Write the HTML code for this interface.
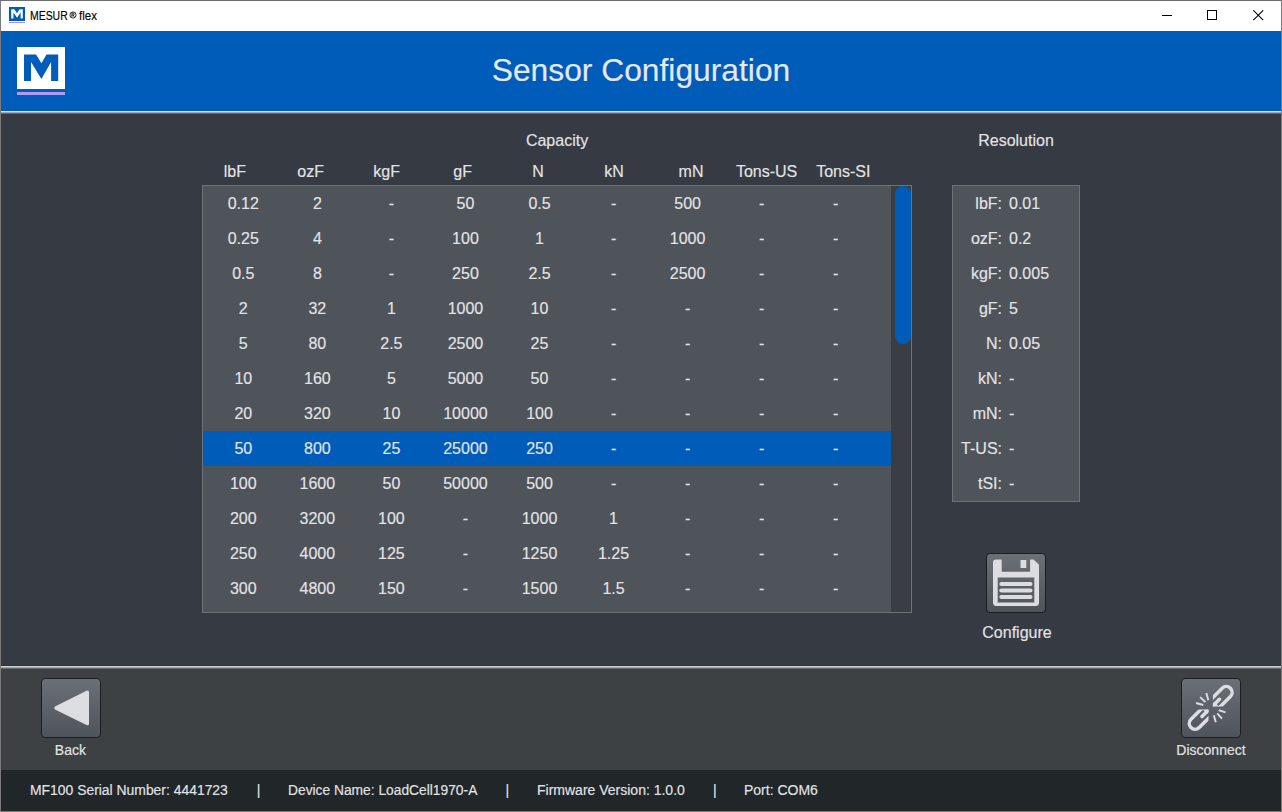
<!DOCTYPE html>
<html><head><meta charset="utf-8">
<style>
*{margin:0;padding:0;box-sizing:border-box}
html,body{width:1282px;height:812px;overflow:hidden;background:#363a42;font-family:"Liberation Sans", sans-serif}
.abs{position:absolute}
.t{position:absolute;white-space:nowrap;line-height:1;-webkit-text-stroke:0.15px currentColor}
</style></head><body>
<div class="abs" style="left:0;top:0;width:1282px;height:31px;background:#fff"></div>
<svg class="abs" style="left:9px;top:7px" width="16" height="17" viewBox="0 0 16 17">
<rect x="0" y="0" width="16" height="14" fill="#005cb9"/>
<path d="M2.2 11.5V2.3H5.4L8 6.2L10.6 2.3H13.8V11.5H11.6V5.6L8 10.8L4.4 5.6V11.5Z" fill="#fff"/>
<rect x="0" y="15" width="16" height="1" fill="#a98ff5"/>
</svg>
<div class="t" style="left:30px;top:9.84px;font-size:12px;color:#000;transform:scaleX(0.87);transform-origin:0 0">MESUR</div>
<svg class="abs" style="left:69.3px;top:10.8px" width="8" height="8" viewBox="0 0 8 8"><circle cx="4" cy="4" r="3.1" fill="none" stroke="#000" stroke-width="0.8"/><path d="M2.9 6V2.1H4.2Q5.3 2.1 5.3 3.05Q5.3 4 4.2 4H2.9M4.2 4L5.4 6" fill="none" stroke="#000" stroke-width="0.8"/></svg>
<div class="t" style="left:78.8px;top:9.84px;font-size:12px;color:#000;transform:scaleX(0.96);transform-origin:0 0">flex</div>
<div class="abs" style="left:1162px;top:15px;width:10px;height:1px;background:#000"></div>
<div class="abs" style="left:1207px;top:10px;width:10px;height:10px;border:1px solid #000"></div>
<svg class="abs" style="left:1253px;top:10px" width="11" height="11" viewBox="0 0 11 11"><path d="M0.3 0.3L10.2 10.2M10.2 0.3L0.3 10.2" stroke="#000" stroke-width="1.05"/></svg>
<div class="abs" style="left:0;top:31px;width:1282px;height:80px;background:#005cb9"></div>
<div class="abs" style="left:0;top:111px;width:1282px;height:1px;background:#dcdee0"></div>
<div class="abs" style="left:0;top:112px;width:1282px;height:1px;background:#a3a6aa"></div>
<div class="abs" style="left:0;top:113px;width:1282px;height:1px;background:#64676d"></div>
<svg class="abs" style="left:17px;top:47px" width="48" height="48" viewBox="0 0 48 48">
<rect x="0" y="0" width="48" height="42" fill="#fff"/>
<path d="M7 34V7.4H19L24.4 16.3L29.5 7.4H41.2V34H34.1V15L24.4 32.1L14 15V34Z" fill="#005cb9"/>
<rect x="0" y="45" width="48" height="3" fill="#b19af0"/>
</svg>
<div class="t" style="left:441.2px;width:400px;text-align:center;top:54.21px;font-size:32px;color:#e6e8ea;transform:scaleX(0.993)">Sensor Configuration</div>
<div class="abs" style="left:0;top:114px;width:1282px;height:551px;background:#363a42"></div>
<div class="t" style="left:357px;width:400px;text-align:center;top:133.46px;font-size:16px;color:#e3e4e6;">Capacity</div>
<div class="t" style="left:34.8px;width:400px;text-align:center;top:164.46px;font-size:16px;color:#e3e4e6;">lbF</div>
<div class="t" style="left:110.6px;width:400px;text-align:center;top:164.46px;font-size:16px;color:#e3e4e6;">ozF</div>
<div class="t" style="left:186.7px;width:400px;text-align:center;top:164.46px;font-size:16px;color:#e3e4e6;">kgF</div>
<div class="t" style="left:262.6px;width:400px;text-align:center;top:164.46px;font-size:16px;color:#e3e4e6;">gF</div>
<div class="t" style="left:338px;width:400px;text-align:center;top:164.46px;font-size:16px;color:#e3e4e6;">N</div>
<div class="t" style="left:414px;width:400px;text-align:center;top:164.46px;font-size:16px;color:#e3e4e6;">kN</div>
<div class="t" style="left:491px;width:400px;text-align:center;top:164.46px;font-size:16px;color:#e3e4e6;">mN</div>
<div class="t" style="left:566.6px;width:400px;text-align:center;top:164.46px;font-size:16px;color:#e3e4e6;">Tons-US</div>
<div class="t" style="left:643.3px;width:400px;text-align:center;top:164.46px;font-size:16px;color:#e3e4e6;">Tons-SI</div>
<div class="abs" style="left:202px;top:185px;width:710px;height:428px;border:1px solid #6d7178;background:#4f535a"></div>
<div class="abs" style="left:891px;top:186px;width:20px;height:426px;background:#3a3d44"></div>
<div class="abs" style="left:895px;top:186px;width:16px;height:158px;border-radius:8px;background:#005cb9"></div>
<div class="abs" style="left:203px;top:431px;width:688px;height:35px;background:#005cb9"></div>
<div class="t" style="left:43.3px;width:400px;text-align:center;top:196.46px;font-size:16px;color:#e3e4e6;">0.12</div>
<div class="t" style="left:117.35px;width:400px;text-align:center;top:196.46px;font-size:16px;color:#e3e4e6;">2</div>
<div class="t" style="left:191.4px;width:400px;text-align:center;top:196.46px;font-size:16px;color:#e3e4e6;">-</div>
<div class="t" style="left:265.45px;width:400px;text-align:center;top:196.46px;font-size:16px;color:#e3e4e6;">50</div>
<div class="t" style="left:339.5px;width:400px;text-align:center;top:196.46px;font-size:16px;color:#e3e4e6;">0.5</div>
<div class="t" style="left:413.55px;width:400px;text-align:center;top:196.46px;font-size:16px;color:#e3e4e6;">-</div>
<div class="t" style="left:487.6px;width:400px;text-align:center;top:196.46px;font-size:16px;color:#e3e4e6;">500</div>
<div class="t" style="left:561.65px;width:400px;text-align:center;top:196.46px;font-size:16px;color:#e3e4e6;">-</div>
<div class="t" style="left:635.7px;width:400px;text-align:center;top:196.46px;font-size:16px;color:#e3e4e6;">-</div>
<div class="t" style="left:43.3px;width:400px;text-align:center;top:231.46px;font-size:16px;color:#e3e4e6;">0.25</div>
<div class="t" style="left:117.35px;width:400px;text-align:center;top:231.46px;font-size:16px;color:#e3e4e6;">4</div>
<div class="t" style="left:191.4px;width:400px;text-align:center;top:231.46px;font-size:16px;color:#e3e4e6;">-</div>
<div class="t" style="left:265.45px;width:400px;text-align:center;top:231.46px;font-size:16px;color:#e3e4e6;">100</div>
<div class="t" style="left:339.5px;width:400px;text-align:center;top:231.46px;font-size:16px;color:#e3e4e6;">1</div>
<div class="t" style="left:413.55px;width:400px;text-align:center;top:231.46px;font-size:16px;color:#e3e4e6;">-</div>
<div class="t" style="left:487.6px;width:400px;text-align:center;top:231.46px;font-size:16px;color:#e3e4e6;">1000</div>
<div class="t" style="left:561.65px;width:400px;text-align:center;top:231.46px;font-size:16px;color:#e3e4e6;">-</div>
<div class="t" style="left:635.7px;width:400px;text-align:center;top:231.46px;font-size:16px;color:#e3e4e6;">-</div>
<div class="t" style="left:43.3px;width:400px;text-align:center;top:266.46px;font-size:16px;color:#e3e4e6;">0.5</div>
<div class="t" style="left:117.35px;width:400px;text-align:center;top:266.46px;font-size:16px;color:#e3e4e6;">8</div>
<div class="t" style="left:191.4px;width:400px;text-align:center;top:266.46px;font-size:16px;color:#e3e4e6;">-</div>
<div class="t" style="left:265.45px;width:400px;text-align:center;top:266.46px;font-size:16px;color:#e3e4e6;">250</div>
<div class="t" style="left:339.5px;width:400px;text-align:center;top:266.46px;font-size:16px;color:#e3e4e6;">2.5</div>
<div class="t" style="left:413.55px;width:400px;text-align:center;top:266.46px;font-size:16px;color:#e3e4e6;">-</div>
<div class="t" style="left:487.6px;width:400px;text-align:center;top:266.46px;font-size:16px;color:#e3e4e6;">2500</div>
<div class="t" style="left:561.65px;width:400px;text-align:center;top:266.46px;font-size:16px;color:#e3e4e6;">-</div>
<div class="t" style="left:635.7px;width:400px;text-align:center;top:266.46px;font-size:16px;color:#e3e4e6;">-</div>
<div class="t" style="left:43.3px;width:400px;text-align:center;top:301.46px;font-size:16px;color:#e3e4e6;">2</div>
<div class="t" style="left:117.35px;width:400px;text-align:center;top:301.46px;font-size:16px;color:#e3e4e6;">32</div>
<div class="t" style="left:191.4px;width:400px;text-align:center;top:301.46px;font-size:16px;color:#e3e4e6;">1</div>
<div class="t" style="left:265.45px;width:400px;text-align:center;top:301.46px;font-size:16px;color:#e3e4e6;">1000</div>
<div class="t" style="left:339.5px;width:400px;text-align:center;top:301.46px;font-size:16px;color:#e3e4e6;">10</div>
<div class="t" style="left:413.55px;width:400px;text-align:center;top:301.46px;font-size:16px;color:#e3e4e6;">-</div>
<div class="t" style="left:487.6px;width:400px;text-align:center;top:301.46px;font-size:16px;color:#e3e4e6;">-</div>
<div class="t" style="left:561.65px;width:400px;text-align:center;top:301.46px;font-size:16px;color:#e3e4e6;">-</div>
<div class="t" style="left:635.7px;width:400px;text-align:center;top:301.46px;font-size:16px;color:#e3e4e6;">-</div>
<div class="t" style="left:43.3px;width:400px;text-align:center;top:336.46px;font-size:16px;color:#e3e4e6;">5</div>
<div class="t" style="left:117.35px;width:400px;text-align:center;top:336.46px;font-size:16px;color:#e3e4e6;">80</div>
<div class="t" style="left:191.4px;width:400px;text-align:center;top:336.46px;font-size:16px;color:#e3e4e6;">2.5</div>
<div class="t" style="left:265.45px;width:400px;text-align:center;top:336.46px;font-size:16px;color:#e3e4e6;">2500</div>
<div class="t" style="left:339.5px;width:400px;text-align:center;top:336.46px;font-size:16px;color:#e3e4e6;">25</div>
<div class="t" style="left:413.55px;width:400px;text-align:center;top:336.46px;font-size:16px;color:#e3e4e6;">-</div>
<div class="t" style="left:487.6px;width:400px;text-align:center;top:336.46px;font-size:16px;color:#e3e4e6;">-</div>
<div class="t" style="left:561.65px;width:400px;text-align:center;top:336.46px;font-size:16px;color:#e3e4e6;">-</div>
<div class="t" style="left:635.7px;width:400px;text-align:center;top:336.46px;font-size:16px;color:#e3e4e6;">-</div>
<div class="t" style="left:43.3px;width:400px;text-align:center;top:371.46px;font-size:16px;color:#e3e4e6;">10</div>
<div class="t" style="left:117.35px;width:400px;text-align:center;top:371.46px;font-size:16px;color:#e3e4e6;">160</div>
<div class="t" style="left:191.4px;width:400px;text-align:center;top:371.46px;font-size:16px;color:#e3e4e6;">5</div>
<div class="t" style="left:265.45px;width:400px;text-align:center;top:371.46px;font-size:16px;color:#e3e4e6;">5000</div>
<div class="t" style="left:339.5px;width:400px;text-align:center;top:371.46px;font-size:16px;color:#e3e4e6;">50</div>
<div class="t" style="left:413.55px;width:400px;text-align:center;top:371.46px;font-size:16px;color:#e3e4e6;">-</div>
<div class="t" style="left:487.6px;width:400px;text-align:center;top:371.46px;font-size:16px;color:#e3e4e6;">-</div>
<div class="t" style="left:561.65px;width:400px;text-align:center;top:371.46px;font-size:16px;color:#e3e4e6;">-</div>
<div class="t" style="left:635.7px;width:400px;text-align:center;top:371.46px;font-size:16px;color:#e3e4e6;">-</div>
<div class="t" style="left:43.3px;width:400px;text-align:center;top:406.46px;font-size:16px;color:#e3e4e6;">20</div>
<div class="t" style="left:117.35px;width:400px;text-align:center;top:406.46px;font-size:16px;color:#e3e4e6;">320</div>
<div class="t" style="left:191.4px;width:400px;text-align:center;top:406.46px;font-size:16px;color:#e3e4e6;">10</div>
<div class="t" style="left:265.45px;width:400px;text-align:center;top:406.46px;font-size:16px;color:#e3e4e6;">10000</div>
<div class="t" style="left:339.5px;width:400px;text-align:center;top:406.46px;font-size:16px;color:#e3e4e6;">100</div>
<div class="t" style="left:413.55px;width:400px;text-align:center;top:406.46px;font-size:16px;color:#e3e4e6;">-</div>
<div class="t" style="left:487.6px;width:400px;text-align:center;top:406.46px;font-size:16px;color:#e3e4e6;">-</div>
<div class="t" style="left:561.65px;width:400px;text-align:center;top:406.46px;font-size:16px;color:#e3e4e6;">-</div>
<div class="t" style="left:635.7px;width:400px;text-align:center;top:406.46px;font-size:16px;color:#e3e4e6;">-</div>
<div class="t" style="left:43.3px;width:400px;text-align:center;top:441.46px;font-size:16px;color:#e3e4e6;">50</div>
<div class="t" style="left:117.35px;width:400px;text-align:center;top:441.46px;font-size:16px;color:#e3e4e6;">800</div>
<div class="t" style="left:191.4px;width:400px;text-align:center;top:441.46px;font-size:16px;color:#e3e4e6;">25</div>
<div class="t" style="left:265.45px;width:400px;text-align:center;top:441.46px;font-size:16px;color:#e3e4e6;">25000</div>
<div class="t" style="left:339.5px;width:400px;text-align:center;top:441.46px;font-size:16px;color:#e3e4e6;">250</div>
<div class="t" style="left:413.55px;width:400px;text-align:center;top:441.46px;font-size:16px;color:#e3e4e6;">-</div>
<div class="t" style="left:487.6px;width:400px;text-align:center;top:441.46px;font-size:16px;color:#e3e4e6;">-</div>
<div class="t" style="left:561.65px;width:400px;text-align:center;top:441.46px;font-size:16px;color:#e3e4e6;">-</div>
<div class="t" style="left:635.7px;width:400px;text-align:center;top:441.46px;font-size:16px;color:#e3e4e6;">-</div>
<div class="t" style="left:43.3px;width:400px;text-align:center;top:476.46px;font-size:16px;color:#e3e4e6;">100</div>
<div class="t" style="left:117.35px;width:400px;text-align:center;top:476.46px;font-size:16px;color:#e3e4e6;">1600</div>
<div class="t" style="left:191.4px;width:400px;text-align:center;top:476.46px;font-size:16px;color:#e3e4e6;">50</div>
<div class="t" style="left:265.45px;width:400px;text-align:center;top:476.46px;font-size:16px;color:#e3e4e6;">50000</div>
<div class="t" style="left:339.5px;width:400px;text-align:center;top:476.46px;font-size:16px;color:#e3e4e6;">500</div>
<div class="t" style="left:413.55px;width:400px;text-align:center;top:476.46px;font-size:16px;color:#e3e4e6;">-</div>
<div class="t" style="left:487.6px;width:400px;text-align:center;top:476.46px;font-size:16px;color:#e3e4e6;">-</div>
<div class="t" style="left:561.65px;width:400px;text-align:center;top:476.46px;font-size:16px;color:#e3e4e6;">-</div>
<div class="t" style="left:635.7px;width:400px;text-align:center;top:476.46px;font-size:16px;color:#e3e4e6;">-</div>
<div class="t" style="left:43.3px;width:400px;text-align:center;top:511.46px;font-size:16px;color:#e3e4e6;">200</div>
<div class="t" style="left:117.35px;width:400px;text-align:center;top:511.46px;font-size:16px;color:#e3e4e6;">3200</div>
<div class="t" style="left:191.4px;width:400px;text-align:center;top:511.46px;font-size:16px;color:#e3e4e6;">100</div>
<div class="t" style="left:265.45px;width:400px;text-align:center;top:511.46px;font-size:16px;color:#e3e4e6;">-</div>
<div class="t" style="left:339.5px;width:400px;text-align:center;top:511.46px;font-size:16px;color:#e3e4e6;">1000</div>
<div class="t" style="left:413.55px;width:400px;text-align:center;top:511.46px;font-size:16px;color:#e3e4e6;">1</div>
<div class="t" style="left:487.6px;width:400px;text-align:center;top:511.46px;font-size:16px;color:#e3e4e6;">-</div>
<div class="t" style="left:561.65px;width:400px;text-align:center;top:511.46px;font-size:16px;color:#e3e4e6;">-</div>
<div class="t" style="left:635.7px;width:400px;text-align:center;top:511.46px;font-size:16px;color:#e3e4e6;">-</div>
<div class="t" style="left:43.3px;width:400px;text-align:center;top:546.46px;font-size:16px;color:#e3e4e6;">250</div>
<div class="t" style="left:117.35px;width:400px;text-align:center;top:546.46px;font-size:16px;color:#e3e4e6;">4000</div>
<div class="t" style="left:191.4px;width:400px;text-align:center;top:546.46px;font-size:16px;color:#e3e4e6;">125</div>
<div class="t" style="left:265.45px;width:400px;text-align:center;top:546.46px;font-size:16px;color:#e3e4e6;">-</div>
<div class="t" style="left:339.5px;width:400px;text-align:center;top:546.46px;font-size:16px;color:#e3e4e6;">1250</div>
<div class="t" style="left:413.55px;width:400px;text-align:center;top:546.46px;font-size:16px;color:#e3e4e6;">1.25</div>
<div class="t" style="left:487.6px;width:400px;text-align:center;top:546.46px;font-size:16px;color:#e3e4e6;">-</div>
<div class="t" style="left:561.65px;width:400px;text-align:center;top:546.46px;font-size:16px;color:#e3e4e6;">-</div>
<div class="t" style="left:635.7px;width:400px;text-align:center;top:546.46px;font-size:16px;color:#e3e4e6;">-</div>
<div class="t" style="left:43.3px;width:400px;text-align:center;top:581.46px;font-size:16px;color:#e3e4e6;">300</div>
<div class="t" style="left:117.35px;width:400px;text-align:center;top:581.46px;font-size:16px;color:#e3e4e6;">4800</div>
<div class="t" style="left:191.4px;width:400px;text-align:center;top:581.46px;font-size:16px;color:#e3e4e6;">150</div>
<div class="t" style="left:265.45px;width:400px;text-align:center;top:581.46px;font-size:16px;color:#e3e4e6;">-</div>
<div class="t" style="left:339.5px;width:400px;text-align:center;top:581.46px;font-size:16px;color:#e3e4e6;">1500</div>
<div class="t" style="left:413.55px;width:400px;text-align:center;top:581.46px;font-size:16px;color:#e3e4e6;">1.5</div>
<div class="t" style="left:487.6px;width:400px;text-align:center;top:581.46px;font-size:16px;color:#e3e4e6;">-</div>
<div class="t" style="left:561.65px;width:400px;text-align:center;top:581.46px;font-size:16px;color:#e3e4e6;">-</div>
<div class="t" style="left:635.7px;width:400px;text-align:center;top:581.46px;font-size:16px;color:#e3e4e6;">-</div>
<div class="t" style="left:816px;width:400px;text-align:center;top:133.46px;font-size:16px;color:#e3e4e6;">Resolution</div>
<div class="abs" style="left:952px;top:185px;width:128px;height:317px;border:1px solid #6d7178;background:#4f535a"></div>
<div class="t" style="left:602px;width:400px;text-align:right;top:196.46px;font-size:16px;color:#e3e4e6;">lbF:</div>
<div class="t" style="left:1009px;top:196.46px;font-size:16px;color:#e3e4e6;">0.01</div>
<div class="t" style="left:602px;width:400px;text-align:right;top:231.46px;font-size:16px;color:#e3e4e6;">ozF:</div>
<div class="t" style="left:1009px;top:231.46px;font-size:16px;color:#e3e4e6;">0.2</div>
<div class="t" style="left:602px;width:400px;text-align:right;top:266.46px;font-size:16px;color:#e3e4e6;">kgF:</div>
<div class="t" style="left:1009px;top:266.46px;font-size:16px;color:#e3e4e6;">0.005</div>
<div class="t" style="left:602px;width:400px;text-align:right;top:301.46px;font-size:16px;color:#e3e4e6;">gF:</div>
<div class="t" style="left:1009px;top:301.46px;font-size:16px;color:#e3e4e6;">5</div>
<div class="t" style="left:602px;width:400px;text-align:right;top:336.46px;font-size:16px;color:#e3e4e6;">N:</div>
<div class="t" style="left:1009px;top:336.46px;font-size:16px;color:#e3e4e6;">0.05</div>
<div class="t" style="left:602px;width:400px;text-align:right;top:371.46px;font-size:16px;color:#e3e4e6;">kN:</div>
<div class="t" style="left:1009px;top:371.46px;font-size:16px;color:#e3e4e6;">-</div>
<div class="t" style="left:602px;width:400px;text-align:right;top:406.46px;font-size:16px;color:#e3e4e6;">mN:</div>
<div class="t" style="left:1009px;top:406.46px;font-size:16px;color:#e3e4e6;">-</div>
<div class="t" style="left:602px;width:400px;text-align:right;top:441.46px;font-size:16px;color:#e3e4e6;">T-US:</div>
<div class="t" style="left:1009px;top:441.46px;font-size:16px;color:#e3e4e6;">-</div>
<div class="t" style="left:602px;width:400px;text-align:right;top:476.46px;font-size:16px;color:#e3e4e6;">tSI:</div>
<div class="t" style="left:1009px;top:476.46px;font-size:16px;color:#e3e4e6;">-</div>
<div class="abs" style="left:986px;top:553px;width:60px;height:60px;background:linear-gradient(#6b7077,#4f535a);border:1px solid #1c1e22;border-radius:4px"></div>
<svg class="abs" style="left:986px;top:553px" width="60" height="60" viewBox="0 0 60 60">
<path fill-rule="evenodd" fill="#dcdde1" d="M10 6.5H47.6L53 11.8V49.5Q53 53 49.5 53H10.5Q7 53 7 49.5V9.5Q7 6.5 10 6.5Z M15.7 6.5V18.8H44.1V6.5Z M11.7 24.4V49.6H48.3V24.4Z"/>
<rect x="34.5" y="7" width="5.8" height="8" fill="#dcdde1"/>
<rect x="13.3" y="28.9" width="33.2" height="4" rx="2" fill="#dcdde1"/>
<rect x="13.3" y="35.4" width="33.2" height="4" rx="2" fill="#dcdde1"/>
<rect x="13.3" y="42" width="33.2" height="4" rx="2" fill="#dcdde1"/>
</svg>
<div class="t" style="left:817px;width:400px;text-align:center;top:625.46px;font-size:16px;color:#e3e4e6;">Configure</div>
<div class="abs" style="left:0;top:665px;width:1282px;height:1px;background:#2e3239"></div>
<div class="abs" style="left:0;top:666px;width:1282px;height:1px;background:#d0d3d6"></div>
<div class="abs" style="left:0;top:667px;width:1282px;height:1px;background:#a3a6a9"></div>
<div class="abs" style="left:0;top:668px;width:1282px;height:1px;background:#65686c"></div>
<div class="abs" style="left:0;top:669px;width:1282px;height:101px;background:#3d4144"></div>
<div class="abs" style="left:41px;top:678px;width:60px;height:60px;background:linear-gradient(#6b7077,#4f535a);border:1px solid #1c1e22;border-radius:4px"></div>
<svg class="abs" style="left:41px;top:678px" width="60" height="60" viewBox="0 0 60 60">
<path d="M14 31.6Q12.4 30 14 28.6L45.5 12.8Q48 11.8 48 14.3V45.4Q48 48 45.5 47L14 31.6Z" fill="#dcdee2"/>
</svg>
<div class="t" style="left:-129.6px;width:400px;text-align:center;top:743.15px;font-size:14px;color:#e3e4e6;">Back</div>
<div class="abs" style="left:1181px;top:678px;width:60px;height:60px;background:linear-gradient(#6b7077,#4f535a);border:1px solid #1c1e22;border-radius:4px"></div>
<svg class="abs" style="left:1181px;top:678px" width="60" height="60" viewBox="0 0 60 60" fill="none" stroke="#dcdde0">
<defs><clipPath id="c1"><rect x="31.9" y="0" width="30" height="28.4"/></clipPath><clipPath id="c2"><rect x="0" y="31.4" width="27.5" height="30"/></clipPath></defs>
<g clip-path="url(#c1)"><g transform="translate(40.45 19.23) rotate(-45)" stroke-width="3.5"><path d="M-16 -5.8L6.86 -5.8A5.8 5.8 0 0 1 6.86 5.8L-16 5.8" stroke-linecap="butt" fill="none"/><path d="M-16 0H-2.85" stroke-linecap="round"/><path d="M-16 -1.75H-8.3V7.5H-16Z" fill="#dcdde0" stroke="none"/></g></g>
<g clip-path="url(#c2)"><g transform="translate(18.95 40.57) rotate(135)" stroke-width="3.5"><path d="M-16 -5.8L6.86 -5.8A5.8 5.8 0 0 1 6.86 5.8L-16 5.8" stroke-linecap="butt" fill="none"/><path d="M-16 0H-2.85" stroke-linecap="round"/><path d="M-16 -1.75H-8.3V7.5H-16Z" fill="#dcdde0" stroke="none"/></g></g>
<g stroke-width="1.9" stroke-linecap="butt">
<path d="M25.3 15.1L27.3 22.2M19.1 19.1L24.4 24M15.1 25L22.3 27"/>
<path d="M32.8 37.2L34.8 44.3M36.2 35.3L41 40.6M37.7 32.1L44.5 34.4"/>
</g>
</svg>
<div class="t" style="left:1011px;width:400px;text-align:center;top:743.15px;font-size:14px;color:#e3e4e6;">Disconnect</div>
<div class="abs" style="left:0;top:770px;width:1282px;height:42px;background:#212629"></div>
<div class="t" style="left:29.5px;top:783.15px;font-size:14px;color:#e3e4e6;transform:scaleX(0.993);transform-origin:0 0">MF100 Serial Number: 4441723</div>
<div class="t" style="left:256.8px;top:783.15px;font-size:14px;color:#e3e4e6;">|</div>
<div class="t" style="left:288px;top:783.15px;font-size:14px;color:#e3e4e6;transform:scaleX(0.985);transform-origin:0 0">Device Name: LoadCell1970-A</div>
<div class="t" style="left:505.5px;top:783.15px;font-size:14px;color:#e3e4e6;">|</div>
<div class="t" style="left:537px;top:783.15px;font-size:14px;color:#e3e4e6;">Firmware Version: 1.0.0</div>
<div class="t" style="left:713px;top:783.15px;font-size:14px;color:#e3e4e6;">|</div>
<div class="t" style="left:744px;top:783.15px;font-size:14px;color:#e3e4e6;">Port: COM6</div>
<div class="abs" style="left:0;top:0;width:1px;height:812px;background:#7b7b7b"></div>
<div class="abs" style="left:1281px;top:0;width:1px;height:812px;background:#7b7b7b"></div>
<div class="abs" style="left:0;top:0;width:1282px;height:1px;background:#6f6f6f"></div>
<div class="abs" style="left:0;top:811px;width:1282px;height:1px;background:#7b7b7b"></div>
</body></html>
